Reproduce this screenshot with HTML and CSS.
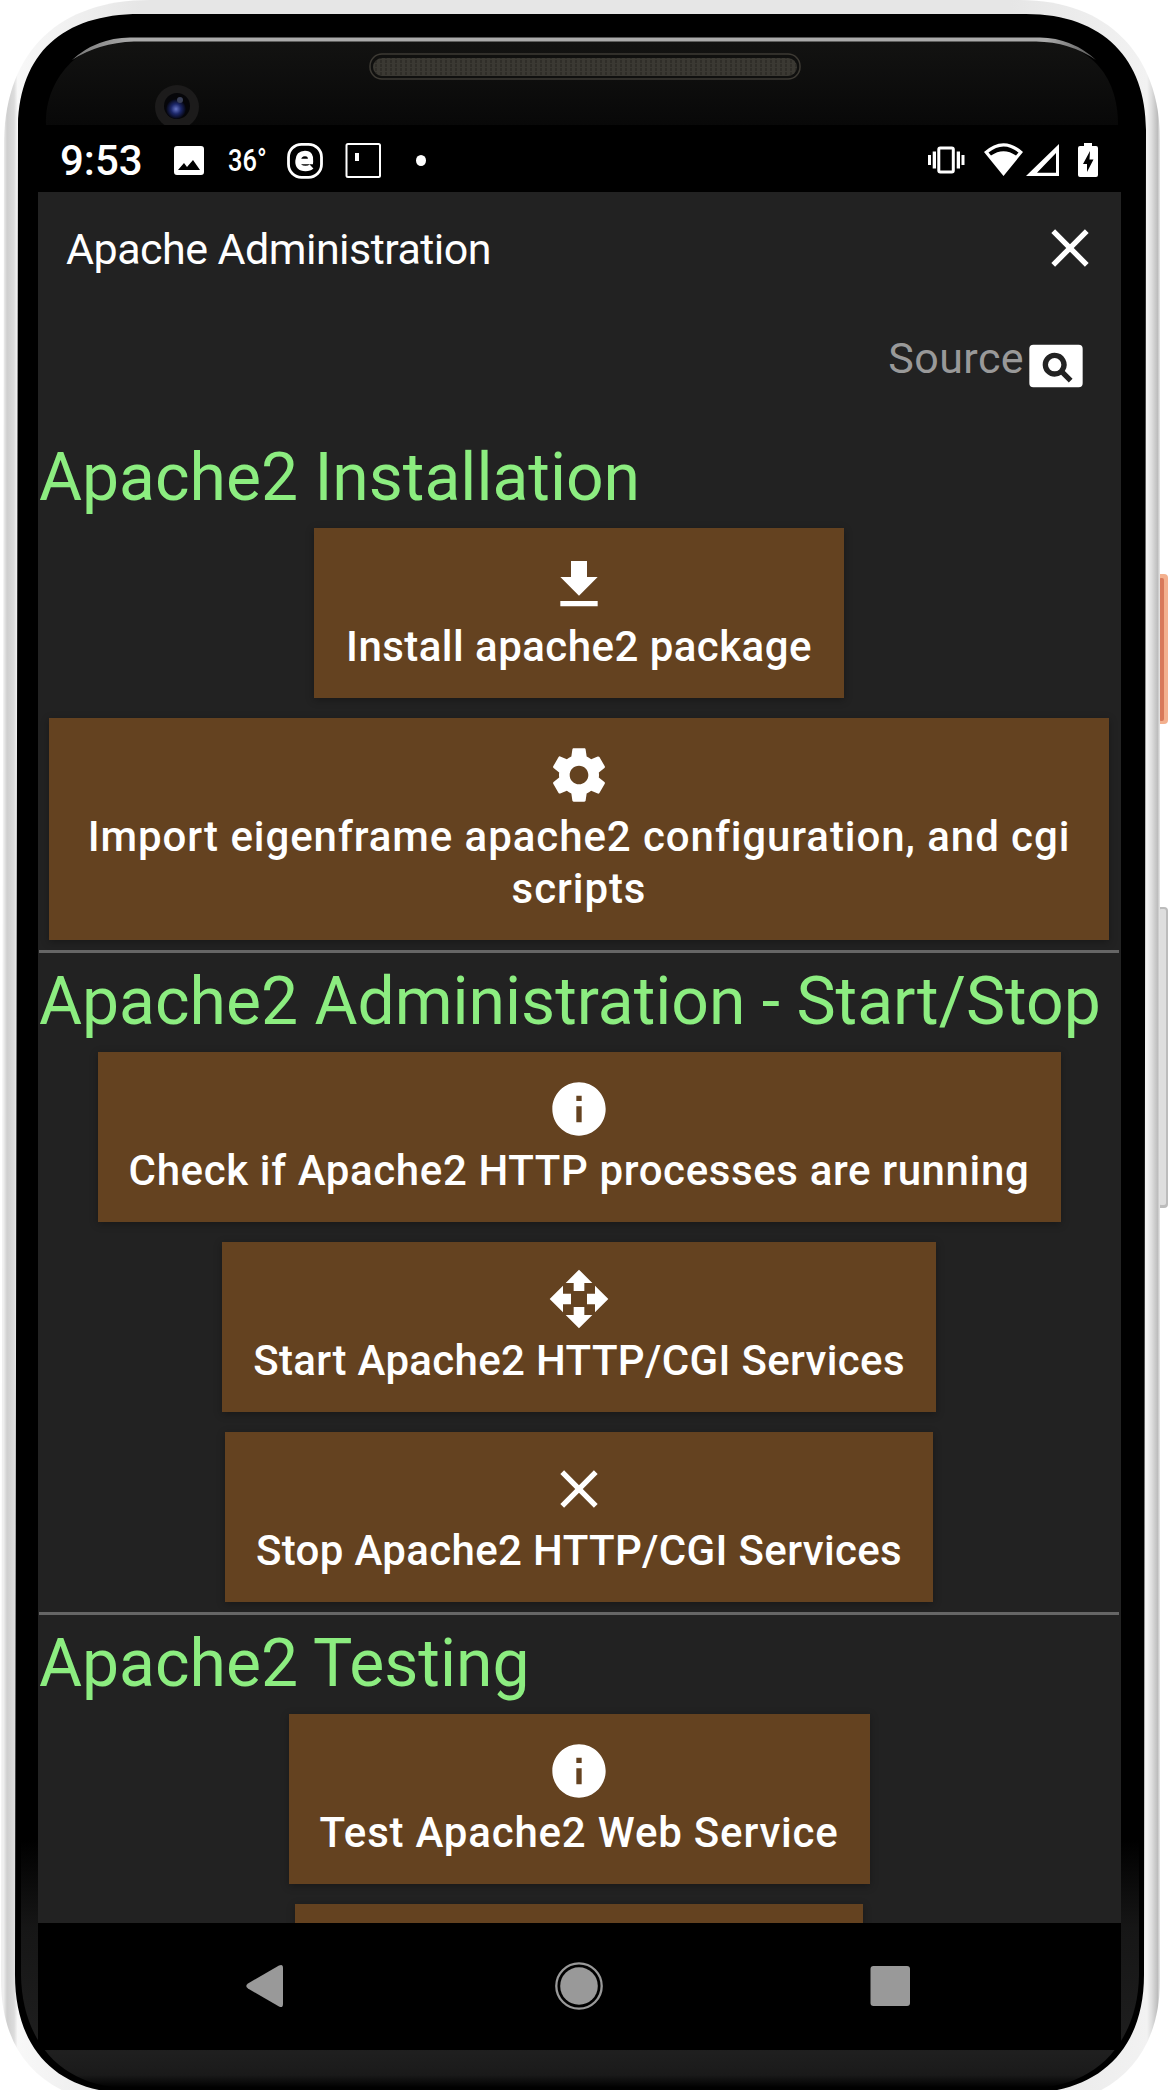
FILE: index.html
```html
<!DOCTYPE html>
<html lang="en">
<head>
<meta charset="utf-8">
<title>Apache Administration</title>
<link rel="stylesheet" href="styles.css">
</head>
<body>
<svg class="symbols" width="0" height="0" aria-hidden="true">
  <symbol id="close" viewBox="0 0 24 24"><path d="M19 6.41 17.59 5 12 10.59 6.41 5 5 6.41 10.59 12 5 17.59 6.41 19 12 13.41 17.59 19 19 17.59 13.41 12z"/></symbol>
  <symbol id="info" viewBox="0 0 24 24"><path d="M12 2C6.48 2 2 6.48 2 12s4.48 10 10 10 10-4.48 10-10S17.52 2 12 2zm1 15h-2v-6h2v6zm0-8h-2V7h2v2z"/></symbol>
</svg>
<div class="phone">
  <svg class="frame" viewBox="0 0 1174 2090" aria-hidden="true">
    <defs>
      <linearGradient id="rim" x1="0" x2="1174" y1="0" y2="0" gradientUnits="userSpaceOnUse">
        <stop offset="0.003" stop-color="#efefef"/><stop offset="0.006" stop-color="#cfcfcf"/><stop offset="0.012" stop-color="#dcdcdc"/><stop offset="0.015" stop-color="#f8f8f8"/>
        <stop offset="0.12" stop-color="#e6e6e6"/><stop offset="0.86" stop-color="#e6e6e6"/>
        <stop offset="0.977" stop-color="#f2f2f2"/><stop offset="0.981" stop-color="#dedede"/><stop offset="0.986" stop-color="#bdbdbd"/><stop offset="0.988" stop-color="#e8e8e8"/>
      </linearGradient>
      <linearGradient id="glass" x1="0" x2="0" y1="40" y2="125" gradientUnits="userSpaceOnUse">
        <stop offset="0" stop-color="#131312"/><stop offset="1" stop-color="#080808"/>
      </linearGradient>
      <linearGradient id="shine" x1="70" x2="1098" y1="0" y2="0" gradientUnits="userSpaceOnUse">
        <stop offset="0" stop-color="#777"/><stop offset="0.06" stop-color="#aaa"/><stop offset="0.95" stop-color="#aaa"/><stop offset="1" stop-color="#555"/>
      </linearGradient>
      <linearGradient id="chin" x1="0" x2="0" y1="1840" y2="2090" gradientUnits="userSpaceOnUse">
        <stop offset="0" stop-color="#000"/><stop offset="0.35" stop-color="#161616"/><stop offset="0.85" stop-color="#1f1f1f"/><stop offset="0.94" stop-color="#1a1a1a"/><stop offset="0.99" stop-color="#000"/>
      </linearGradient>
      <radialGradient id="lens"><stop offset="0" stop-color="#6674c4"/><stop offset="0.5" stop-color="#1c2768"/><stop offset="1" stop-color="#05060f"/></radialGradient>
      <pattern id="mesh" width="5" height="4" patternUnits="userSpaceOnUse"><rect width="5" height="4" fill="#3b3933"/><path d="M1 0V3" stroke="#25231f"/></pattern>
    </defs>
    <rect x="1155" y="574" width="13" height="150" rx="4" fill="#f3b08e"/>
    <rect x="1159" y="578" width="5" height="143" rx="2" fill="#d8795a"/>
    <rect x="1155" y="907" width="13" height="301" rx="4" fill="#bcbcbc"/>
    <rect x="1159" y="909" width="7" height="296" rx="2" fill="#dedede"/>
    <path d="M4 140C6 50 60 0 150 0H1020C1108 0 1160 55 1160 140V1980C1160 2060 1110 2106 1030 2106H140C50 2106 1 2060 1 1980Z" fill="url(#rim)"/>
    <path d="M18 125C20 54 62 14 140 14H1026C1104 14 1146 60 1146 130L1144 1975C1144 2050 1098 2093 1026 2093H130C58 2093 15 2050 15 1975Z" fill="#000"/>
    <path d="M46 125C44 84 75 40 130 40H1030C1090 40 1118 75 1118 125Z" fill="url(#glass)"/>
    <path d="M72 60Q96 38 130 37.500H1040Q1072 38 1096 60Q1070 42 1036 41.500H134Q98 43 72 60Z" fill="url(#shine)"/>
    <path d="M21 1840V1975C22 2040 60 2088 130 2088H1030C1098 2088 1138 2040 1139 1975V1840Z" fill="url(#chin)"/>
    <rect x="370" y="54" width="430" height="25" rx="12" fill="#10100f" stroke="#3d3a34" stroke-width="1.500"/>
    <rect x="373" y="58" width="424" height="18" rx="9" fill="url(#mesh)"/>
    <circle cx="177" cy="107" r="22" fill="#1c1b1b"/>
    <circle cx="177" cy="106" r="13" fill="#060609"/>
    <circle cx="176" cy="109" r="10" fill="url(#lens)"/>
    <circle cx="180" cy="100" r="3" fill="#3a4058"/>
  </svg>
  <main class="screen">
    <div class="status">
      <span class="time">9:53</span>
      <svg class="st-left" width="250" height="67" viewBox="160 125 250 67" aria-hidden="true">
        <path fill="#fff" fill-rule="evenodd" d="M177 146h24q3 0 3 3v23q0 3-3 3h-24q-3 0-3-3v-23q0-3 3-3zM178 170h22l-7-10-6 7-3-4z"/>
        <rect x="288.500" y="144.300" width="33" height="33" rx="13" fill="none" stroke="#fff" stroke-width="2.800"/>
        <path d="M299 161.500h11.500q1-8-5.500-8t-7 7.500 7.500 7.500q4 0 6-2" fill="none" stroke="#fff" stroke-width="5.400"/>
        <rect x="346.500" y="144" width="33.500" height="33" rx="1.500" fill="none" stroke="#fff" stroke-width="2"/>
        <path d="M355 153h4v8h-4z" fill="#fff"/>
      </svg>
      <span class="temp">36°</span>
      <span class="dot"></span>
      <svg class="st-right" width="180" height="67" viewBox="920 125 180 67" fill="#fff" aria-hidden="true">
        <path d="M928 155h3v10h-3zM932.700 151.500h3.300v17h-3.300zM956.700 151.500h3.300v17h-3.300zM961.500 155h3v10h-3z"/>
        <rect x="938.800" y="148" width="14.500" height="24" rx="1.500" fill="none" stroke="#fff" stroke-width="3"/>
        <path fill-rule="evenodd" d="M984 152Q1003.500 134.500 1023 152L1003.500 176ZM988.500 152.500 991 155.500Q1003.500 147 1016 155.500L1018.500 152.500Q1003.500 140.500 988.500 152.500Z"/>
        <path fill-rule="evenodd" d="M1026 176 1059 144V176ZM1037 172.700H1056V153Z"/>
        <path fill-rule="evenodd" d="M1084 143h8v3h4q2 0 2 2v27q0 2-2 2h-16q-2 0-2-2v-27q0-2 2-2h4zM1090 151l-7 13h4v8l6.500-12.500h-4z"/>
      </svg>
    </div>
    <div class="content">
      <header class="titlebar">
        <h1>Apache Administration</h1>
        <svg class="icon" viewBox="0 0 24 24"><use href="#close"/></svg>
      </header>
      <div class="source">
        <span>Source</span>
        <svg class="icon" viewBox="0 0 24 24"><path fill-rule="evenodd" d="M3.500 4h17Q22 4 22 5.500v13Q22 20 20.500 20h-17Q2 20 2 18.500v-13Q2 4 3.500 4zM11.500 7a4.500 4.500 0 1 0 2.400 8.300l2.900 2.900 1.400-1.400-2.900-2.900A4.500 4.500 0 0 0 11.500 7zm0 2a2.500 2.500 0 1 1 0 5 2.500 2.500 0 0 1 0-5z"/></svg>
      </div>
      <section>
        <h2>Apache2 Installation</h2>
        <button class="action install"><svg class="icon" viewBox="0 0 24 24"><path d="M19 9h-4V3H9v6H5l7 7 7-7zM5 18v2h14v-2H5z"/></svg><span>Install apache2 package</span></button>
        <button class="action import"><svg class="icon" viewBox="0 0 24 24"><path d="M19.430 12.980c.04-.32.07-.64.07-.98s-.03-.66-.07-.98l2.110-1.650c.19-.15.24-.42.120-.64l-2-3.460c-.12-.22-.39-.3-.61-.22l-2.490 1c-.52-.4-1.080-.73-1.690-.98l-.38-2.650C14.460 2.180 14.250 2 14 2h-4c-.25 0-.46.180-.49.420l-.38 2.650c-.61.250-1.170.590-1.690.980l-2.490-1c-.23-.09-.49 0-.61.220l-2 3.460c-.13.220-.07.490.120.640l2.110 1.650c-.04.320-.07.650-.07.980s.03.660.07.980l-2.110 1.650c-.19.150-.24.420-.12.640l2 3.460c.12.220.39.300.61.220l2.490-1c.52.400 1.080.730 1.690.980l.38 2.650c.03.240.24.420.49.420h4c.25 0 .46-.18.49-.42l.38-2.650c.61-.25 1.170-.59 1.690-.98l2.490 1c.23.090.49 0 .61-.22l2-3.460c.12-.22.070-.49-.12-.64l-2.110-1.650zM12 15.500c-1.930 0-3.500-1.570-3.500-3.500s1.570-3.500 3.500-3.500 3.500 1.570 3.500 3.500-1.570 3.500-3.500 3.500z"/></svg><span>Import eigenframe apache2 configuration, and cgi<br>scripts</span></button>
      </section>
      <hr>
      <section>
        <h2>Apache2 Administration - Start/Stop</h2>
        <button class="action check"><svg class="icon" viewBox="0 0 24 24"><use href="#info"/></svg><span>Check if Apache2 HTTP processes are running</span></button>
        <button class="action start"><svg class="icon" viewBox="0 0 24 24"><path d="M10 9h4V6h3l-5-5-5 5h3v3zm-1 1H6V7l-5 5 5 5v-3h3v-4zm14 2-5-5v3h-3v4h3v3l5-5zm-9 3h-4v3H7l5 5 5-5h-3v-3z"/></svg><span>Start Apache2 HTTP/CGI Services</span></button>
        <button class="action stop"><svg class="icon" viewBox="0 0 24 24"><use href="#close"/></svg><span>Stop Apache2 HTTP/CGI Services</span></button>
      </section>
      <hr>
      <section>
        <h2>Apache2 Testing</h2>
        <button class="action test"><svg class="icon" viewBox="0 0 24 24"><use href="#info"/></svg><span>Test Apache2 Web Service</span></button>
        <button class="action more"></button>
      </section>
    </div>
    <nav class="navbar">
      <svg width="1082" height="127" viewBox="38 1923 1082 127" fill="#999">
        <path d="M279 1965.500Q283 1963.500 283 1968V2004Q283 2008.500 279 2006.500L248 1988.500Q244.500 1986 248 1983.500Z"/>
        <circle cx="579" cy="1986" r="22.700" fill="none" stroke="#999" stroke-width="2.300"/>
        <circle cx="579" cy="1986" r="18.800"/>
        <rect x="870.500" y="1966" width="39.500" height="40" rx="3"/>
      </svg>
    </nav>
  </main>
</div>
</body>
</html>
```
FILE: styles.css
```css
* { box-sizing: border-box; }
body { margin: 0; background: #fff; font-family: Roboto, "Liberation Sans", sans-serif; color: #fff; }
.symbols { display: block; }
.phone { display: grid; width: 1174px; height: 2090px; overflow: hidden; }
.frame, .screen { grid-area: 1 / 1; }
.frame { width: 1174px; height: 2090px; }
.screen { display: flex; flex-direction: column; width: 1083px; height: 1925px; margin: 125px 0 0 38px; background: #222; overflow: hidden; }
.icon { width: 64px; height: 64px; fill: #fff; flex: none; }

.status { display: grid; flex: none; height: 67px; background: #000; }
.status > * { grid-area: 1 / 1; align-self: center; white-space: nowrap; }
.time { padding: 4px 0 0 22px; font-size: 42px; font-weight: 500; line-height: 63px; }
.st-left { margin-left: 122px; }
.st-right { margin-left: 882px; }
.temp { width: 50px; margin-left: 190px; padding-top: 5px; font-size: 31px; font-weight: 500; line-height: 62px; transform: scaleX(.82); transform-origin: left; }
.dot { width: 10px; height: 11px; margin: 3px 0 0 378px; border-radius: 50%; background: #fff; }

.content { display: flex; flex: 1; flex-direction: column; min-height: 0; width: 1082px; overflow: hidden; }
.titlebar { display: flex; flex: none; align-items: center; justify-content: space-between; height: 112px; padding: 0 18px 0 28px; }
.titlebar h1 { margin: 2px 0 0; font-size: 43px; font-weight: 400; line-height: 50px; letter-spacing: -.53px; white-space: nowrap; }
.source { display: flex; flex: none; align-items: center; justify-content: flex-end; height: 125px; padding: 0 32px 2px 0; color: #999; font-size: 43px; line-height: 50px; }
.source span { margin-bottom: 15px; letter-spacing: .4px; }

section { display: flex; flex: none; flex-direction: column; align-items: center; }
h2 { align-self: stretch; margin: 0; height: 89px; padding: 11px 0 2px 1px; color: #8ced80; font-size: 66px; font-weight: 400; line-height: 76px; white-space: nowrap; }
.action { display: flex; flex: none; flex-direction: column; align-items: center; height: 170px; margin: 10px 0; padding: 25px 0 0; border: 0; border-radius: 0; background: #644220; color: #fff; font: 500 42px/52px Roboto, "Liberation Sans", sans-serif; box-shadow: 0 2px 8px rgba(0, 0, 0, .3); white-space: nowrap; }
.action span { margin-top: 4px; }
.install { width: 530px; letter-spacing: .46px; }
.import { width: 1060px; height: 222px; letter-spacing: .93px; }
.check { width: 963px; letter-spacing: .62px; }
.start { width: 714px; letter-spacing: .34px; }
.stop { width: 708px; letter-spacing: .35px; }
.test { width: 581px; letter-spacing: .8px; }
.more { width: 568px; }
hr { flex: none; width: 1080px; height: 3px; margin: 0 auto; border: 0; background: #666; }
.navbar { flex: none; height: 127px; background: #000; }
.navbar svg { display: block; }
```
